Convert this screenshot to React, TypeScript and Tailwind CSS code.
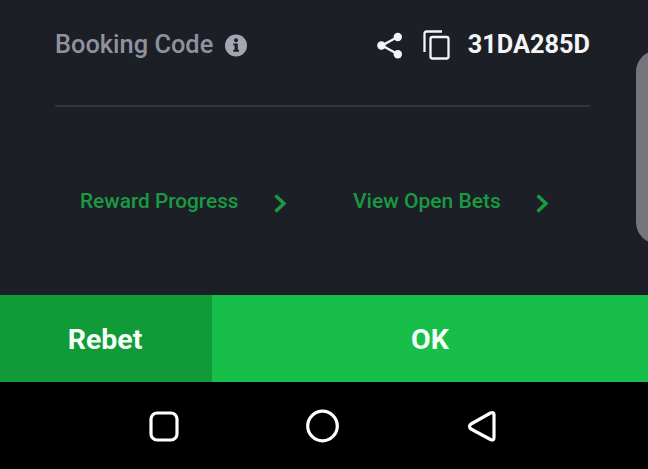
import React from "react";

const Chevron: React.FC = () => (
  <svg width="15" height="21" viewBox="0 0 15 21" fill="none" className="mt-[4px] text-[#1a9a41]">
    <path d="M2.5 2.5 L11 10.5 L2.5 18.5" stroke="currentColor" strokeWidth="3.4" />
  </svg>
);

const ShareIcon: React.FC = () => (
  <svg width="26" height="27" viewBox="0 0 26 27" fill="none">
    <path d="M20.5 5 L5 13.5 L20.5 22" stroke="#f4f5f6" strokeWidth="2.4" />
    <circle cx="20.8" cy="5" r="4.2" fill="#f4f5f6" />
    <circle cx="4.4" cy="13.5" r="4.2" fill="#f4f5f6" />
    <circle cx="20.8" cy="22.2" r="4.2" fill="#f4f5f6" />
  </svg>
);

const CopyIcon: React.FC = () => (
  <svg width="27" height="30" viewBox="0 0 27 30" fill="none" stroke="#f4f5f6" strokeWidth="2.3">
    <path d="M19 1.5 H3.5 Q1.5 1.5 1.5 3.5 V22" />
    <rect x="7.5" y="7" width="18" height="21.5" rx="2" />
  </svg>
);

const InfoIcon: React.FC = () => (
  <svg width="22" height="23" viewBox="0 0 22 23">
    <circle cx="11" cy="11.5" r="11" fill="#a4a7b2" />
    <circle cx="11" cy="6.2" r="2" fill="#1c1f26" />
    <path d="M8.3 9.6 H12.8 V15.8 H14 V17.8 H8.3 V15.8 H9.6 V11.6 H8.3 Z" fill="#1c1f26" />
  </svg>
);

const links = ["Reward Progress", "View Open Bets"];

export default function App() {
  return (
    <div
      className="relative flex h-[469px] w-[648px] flex-col overflow-hidden bg-black"
      style={{ fontFamily: "Roboto, sans-serif" }}
    >
      <div className="flex h-[295px] flex-col bg-[#1c1f26] px-[55px] pt-[29px]">
        <div className="flex h-[32px] w-[535px] items-center justify-between">
          <div className="flex items-center gap-[12px]">
            <span className="text-[25.4px] font-medium leading-none text-[#8f929d]">Booking Code</span>
            <InfoIcon />
          </div>
          <div className="flex items-center">
            <ShareIcon />
            <span className="ml-[20px]"><CopyIcon /></span>
            <span className="ml-[18px] text-[25.3px] font-bold leading-none text-[#f4f5f6]">31DA285D</span>
          </div>
        </div>
        <div className="mt-[44px] h-[2px] w-[535px] bg-[#32353c]" />
        <div className="mt-[82px] flex pl-[25px]">
          <div className="flex w-[273px] items-center gap-[34px]">
            <span className="text-[20.8px] font-medium leading-none text-[#1a9a41]">{links[0]}</span>
            <Chevron />
          </div>
          <div className="flex items-center gap-[34px]">
            <span className="text-[21px] font-medium leading-none text-[#1a9a41]">{links[1]}</span>
            <Chevron />
          </div>
        </div>
      </div>

      <div className="flex h-[87px]">
        <div className="flex w-[212px] items-center justify-center bg-[#119a38] pr-[2px] pt-[4px] text-[28.5px] font-bold text-[#f4fff7]">
          Rebet
        </div>
        <div className="flex flex-1 items-center justify-center bg-[#18be4a] pt-[4px] text-[28.5px] font-bold text-[#f4fff7]">
          OK
        </div>
      </div>

      <div className="flex h-[87px] items-center bg-black pl-[149px]">
        <svg width="350" height="36" viewBox="0 0 350 36" fill="none" stroke="#fff" strokeWidth="3.2">
          <rect x="2" y="5" width="26" height="27" rx="6" />
          <circle cx="173.5" cy="18" r="14.8" />
          <path d="M345 6.5 V29.5 Q345 33 341.5 31.5 L322 21 Q319 18.5 322 16 L341.5 5 Q345 3.5 345 6.5 Z" strokeLinejoin="round" />
        </svg>
      </div>

      <div className="absolute -right-[28px] top-[50px] h-[194px] w-[40px] rounded-l-[22px] bg-[#75767b]" />
    </div>
  );
}
